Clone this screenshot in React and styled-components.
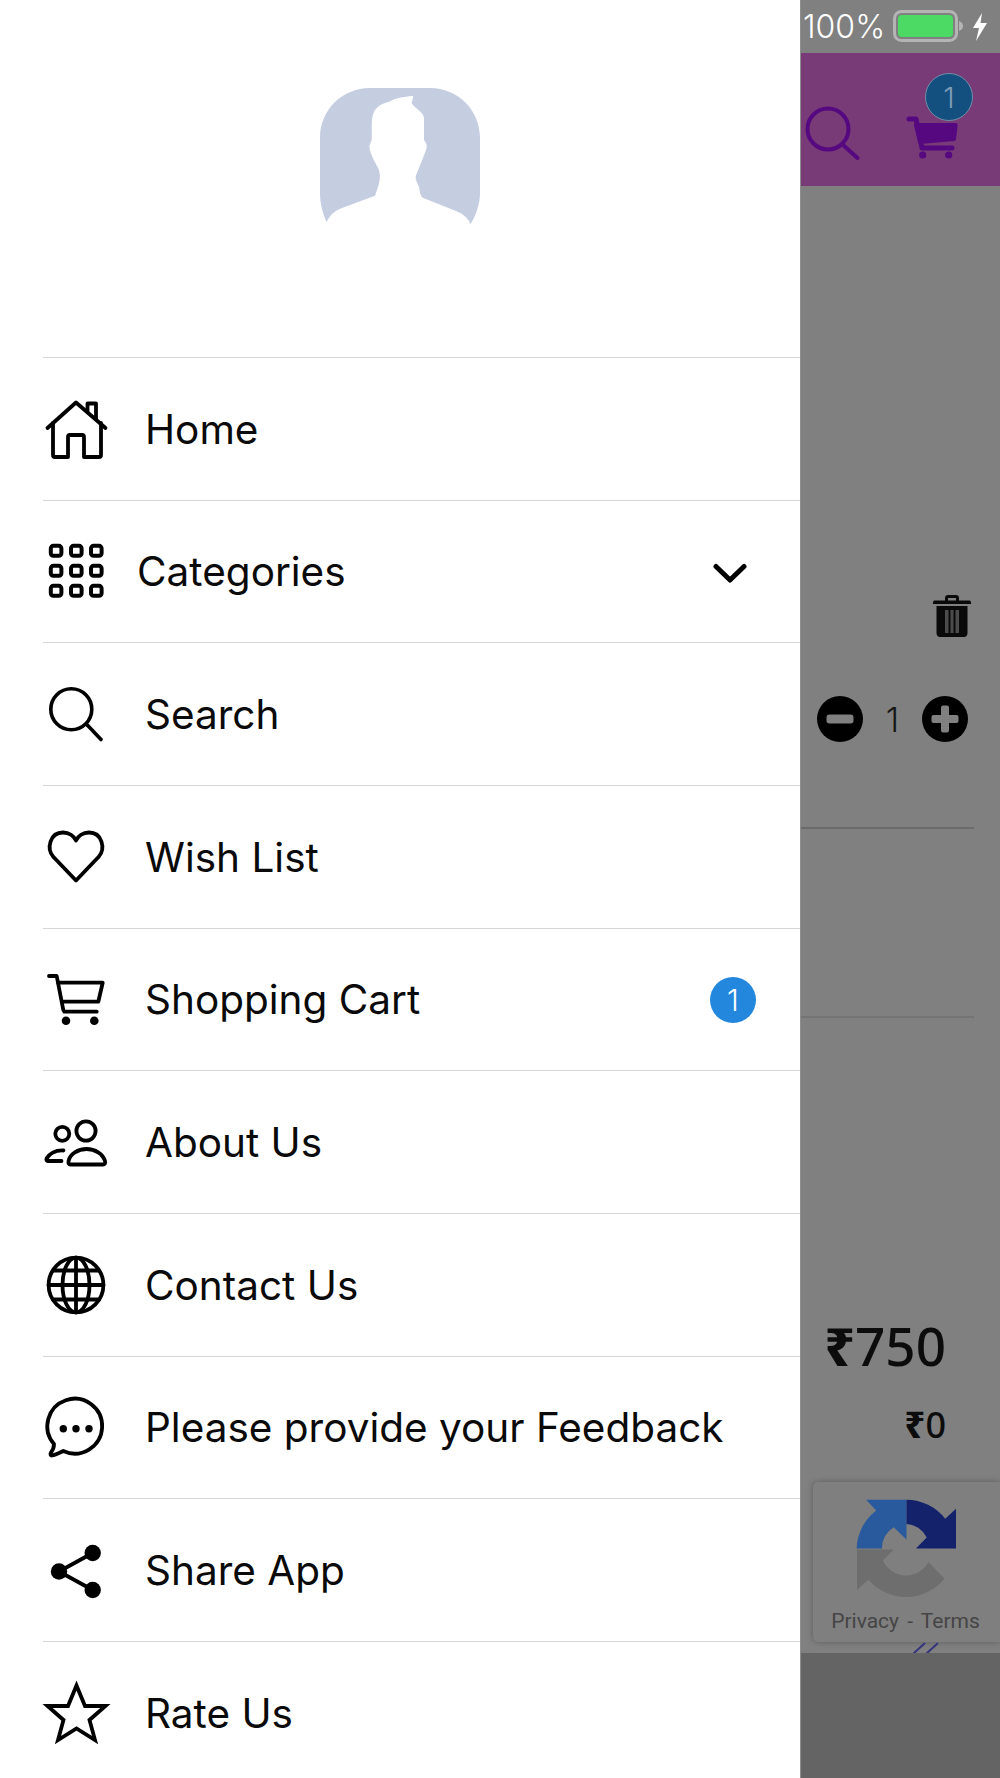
import React from "react";
import styled, { createGlobalStyle } from "styled-components";

const Global = createGlobalStyle`
  html, body { margin: 0; padding: 0; background: #fff; }
  body { font-family: "Inter", "Liberation Sans", sans-serif; }
  * { box-sizing: border-box; }
`;

const Page = styled.div`
  width: 1000px;
  height: 1778px;
  display: flex;
  overflow: hidden;
`;

const Drawer = styled.aside`
  width: 800px;
  flex: none;
  background: #fff;
  display: flex;
  flex-direction: column;
  padding-left: 43px;
`;

const Profile = styled.div`
  height: 357px;
  flex: none;
  padding: 88px 0 0 277px;
`;

const Row = styled.div`
  height: 142.67px;
  flex: none;
  display: flex;
  align-items: center;
  border-top: 1.5px solid #d6d6d6;
  padding-right: 44px;
`;

const IconSlot = styled.svg`
  width: 67px;
  height: 67px;
  flex: none;
  overflow: visible;
  fill: none;
  stroke: #000;
  stroke-width: ${(p) => p.$sw || 3.8};
  stroke-linecap: ${(p) => (p.$miter ? "butt" : "round")};
  stroke-linejoin: ${(p) => (p.$miter ? "miter" : "round")};
`;

const Label = styled.span`
  margin: 2px 0 0 ${(p) => p.$gap}px;
  flex: 1;
  font-size: 40.5px;
  line-height: 48px;
  color: #0a0a0a;
  white-space: nowrap;
`;

const Chevron = styled.svg`
  width: 36px;
  height: 22px;
  margin: 6px 8px 0 0;
  fill: none;
  stroke: #000;
  stroke-width: 5;
  stroke-linecap: round;
  stroke-linejoin: round;
`;

const CountBadge = styled.span`
  width: 46px;
  height: 46px;
  margin-top: 2px;
  border-radius: 50%;
  background: #2287dd;
  color: #fff;
  font-size: 30px;
  font-weight: 300;
  display: flex;
  align-items: center;
  justify-content: center;
`;

const Side = styled.section`
  position: relative;
  flex: 1;
  background: #808080;
  display: flex;
  flex-direction: column;
  border-left: 1px solid #8e8e8e;
`;

const StatusBar = styled.div`
  height: 53px;
  flex: none;
  display: flex;
  align-items: center;
  padding-left: 2px;
  color: #fff;
  font-size: 32px;
  font-weight: 300;
`;

const Battery = styled.svg`
  width: 72px;
  height: 34px;
  margin-left: 8px;
`;

const Bolt = styled.svg`
  width: 16px;
  height: 28px;
  margin-left: 7px;
  fill: #fff;
`;

const TopBar = styled.div`
  height: 133px;
  flex: none;
  background: #783b78;
  position: relative;
  display: flex;
  align-items: flex-end;
  padding: 0 0 25px 4px;
`;

const TopIcon = styled.svg`
  flex: none;
  width: ${(p) => p.$w}px;
  height: ${(p) => p.$h}px;
  margin-left: ${(p) => p.$ml || 0}px;
  fill: none;
  stroke: #55087f;
  stroke-width: 4;
  stroke-linecap: round;
  stroke-linejoin: round;
`;

const TopBadge = styled.span`
  position: absolute;
  left: 124px;
  top: 20px;
  width: 48px;
  height: 48px;
  border-radius: 50%;
  background: #14507f;
  border: 1px solid #6f8ea6;
  color: #7f9db5;
  font-size: 29px;
  font-weight: 300;
  display: flex;
  align-items: center;
  justify-content: center;
`;

const Body = styled.div`
  flex: 1;
  display: flex;
  flex-direction: column;
`;

const TrashRow = styled.div`
  margin-top: 409px;
  height: 42px;
  display: flex;
  justify-content: flex-end;
  padding-right: 29px;
`;

const Stepper = styled.div`
  margin-top: 59px;
  height: 46px;
  display: flex;
  align-items: center;
  padding-left: 16px;
`;

const StepIcon = styled.svg`
  width: 46px;
  height: 46px;
  flex: none;
`;

const Qty = styled.span`
  width: 59px;
  text-align: center;
  font-size: 34px;
  font-weight: 300;
  color: #161616;
`;

const Divider = styled.div`
  margin-top: ${(p) => p.$mt}px;
  width: 173px;
  height: 2px;
  background: ${(p) => p.$c};
`;

const Amount = styled.div`
  margin-top: ${(p) => p.$mt}px;
  padding-right: 54px;
  text-align: right;
  font-family: "Noto Sans", "DejaVu Sans", sans-serif;
  font-size: ${(p) => p.$size}px;
  line-height: ${(p) => p.$lh}px;
  font-weight: ${(p) => p.$weight};
  color: #0c0c0c;
`;

const Rupee = styled.span`
  font-weight: 800;
`;

const Recaptcha = styled.div`
  position: absolute;
  left: 12px;
  right: 0;
  top: 1482px;
  height: 160px;
  background: #7f7f7f;
  border-radius: 5px 0 0 5px;
  box-shadow: 0 0 6px rgba(0, 0, 0, 0.28);
  display: flex;
  flex-direction: column;
  align-items: center;
`;

const CaptchaLogo = styled.svg`
  width: 101px;
  height: 101px;
  margin-top: 17px;
`;

const CaptchaText = styled.div`
  margin-top: 8px;
  margin-right: 2px;
  font-family: "Roboto", sans-serif;
  font-size: 21px;
  word-spacing: 3px;
  line-height: 26px;
  color: #454545;
  white-space: nowrap;
`;

const Slashes = styled.svg`
  position: absolute;
  left: 110px;
  top: 1642px;
  width: 32px;
  height: 12px;
  fill: none;
  stroke: #34347f;
  stroke-width: 2;
`;

const Footer = styled.div`
  height: 125px;
  flex: none;
  background: #646464;
  position: relative;
`;

const HomeIcon = () => (
  <IconSlot viewBox="0 0 67 67">
    <path d="M4.5 33 33 7.5 62.5 33" />
    <path d="M44.5 16V8.5H53V24" />
    <path d="M10 28V60a2 2 0 0 0 2 2H25V42a2 2 0 0 1 2-2H39a2 2 0 0 1 2 2V62H56a2 2 0 0 0 2-2V28" />
  </IconSlot>
);

const GridIcon = () => (
  <IconSlot viewBox="0 0 67 67" $sw={4}>
    {[7.8, 27.8, 47.8].flatMap((y) =>
      [7.8, 28, 48].map((x) => <rect key={`${x}-${y}`} x={x} y={y} width="10.6" height="10" rx="2.6" />)
    )}
  </IconSlot>
);

const SearchIcon = () => (
  <IconSlot viewBox="0 0 67 67" $sw={3.6}>
    <circle cx="28.3" cy="28.3" r="20.5" />
    <path d="M44.3 44 58 58.5" />
  </IconSlot>
);

const HeartIcon = () => (
  <IconSlot viewBox="0 0 67 67">
    <path d="M33 57.5 10.5 34C3 25.5 7 9.5 20 9.5 26 9.5 31 13 33 17.5 35 13 40 9.5 46 9.5 59 9.5 63 25.5 55.5 34Z" />
  </IconSlot>
);

const CartIcon = () => (
  <IconSlot viewBox="0 0 67 67">
    <path d="M6 10H13.7L20.3 44" />
    <path d="M15.3 16.7H59.7L55.3 35.7H19" />
    <path d="M21.3 45.7H53.7" />
    <circle cx="23" cy="54.7" r="4.3" fill="#000" stroke="none" />
    <circle cx="51.3" cy="54.7" r="4.3" fill="#000" stroke="none" />
  </IconSlot>
);

const PeopleIcon = () => (
  <IconSlot viewBox="0 0 67 67">
    <circle cx="43" cy="22" r="9.6" />
    <circle cx="19.3" cy="24.8" r="7" />
    <path d="M25.6 52C27 45 35 40 43.6 40 52 40 60 45 62 52 62.6 54.5 61.5 55.5 60 55.5H27.5C26 55.5 25 54.5 25.6 52Z" />
    <path d="M20.5 41.5C12 41 6 45 3.6 49.5 3 51 3.6 52 5 52H18.5" />
  </IconSlot>
);

const GlobeIcon = () => (
  <IconSlot viewBox="0 0 67 67">
    <circle cx="33" cy="34" r="27.4" />
    <ellipse cx="33" cy="34" rx="13.5" ry="27.4" />
    <path d="M33 6.6V61.4M5.6 34H60.4M10 19.5H56M10 48.5H56" />
  </IconSlot>
);

const ChatIcon = () => (
  <IconSlot viewBox="0 0 67 67">
    <path d="M11 50A27.4 27.4 0 1 1 20.3 57C16 59 12 61 9 61.5 7.5 61.5 7 60 8 58.5 10 56 11 53 11 50Z" />
    <circle cx="20.3" cy="34.8" r="3.7" fill="#000" stroke="none" />
    <circle cx="33" cy="34.8" r="3.7" fill="#000" stroke="none" />
    <circle cx="46" cy="34.8" r="3.7" fill="#000" stroke="none" />
  </IconSlot>
);

const ShareIcon = () => (
  <IconSlot viewBox="0 0 67 67">
    <path d="M49.7 16 16 34.5 49.7 53" />
    <circle cx="49.7" cy="16" r="8.2" fill="#000" stroke="none" />
    <circle cx="16" cy="34.5" r="8.2" fill="#000" stroke="none" />
    <circle cx="49.7" cy="53" r="8.2" fill="#000" stroke="none" />
  </IconSlot>
);

const StarIcon = () => (
  <IconSlot viewBox="0 0 67 67" $sw={3.8} $miter>
    <path d="M33.5 6.5 42 27H62.5L46.5 41 52 61 33.5 49.5 15 61 20.5 41 4.5 27H25Z" />
  </IconSlot>
);

const Avatar = () => (
  <svg width="160" height="138" viewBox="0 0 160 138">
    <path
      fill="#c5cde1"
      d="M6.7 134C3 126 0 116 0 105V50C0 22 22 0 50 0H110C138 0 160 22 160 50V105C160 116 156 127 150.7 136 147 129 143 126 136 123L103.3 110C100 108 100 104 99 99L96 92C95 88 97 85 99 80L105.7 63C107.5 59 107 56 104 52V30C104 24 93 19 91.7 15L93.3 7.7C83 9 75 10 70 13.4 62 15 56 19 54 24 51 29 52 40 51.7 52L49.3 58C50 66 54 72 58 80 61 86 60 92 58.3 98L55 107.7 22 120C14 123 10 127 6.7 134Z"
    />
  </svg>
);

const items = [
  { icon: HomeIcon, text: "Home" },
  { icon: GridIcon, text: "Categories", gap: 27, chevron: true },
  { icon: SearchIcon, text: "Search" },
  { icon: HeartIcon, text: "Wish List" },
  { icon: CartIcon, text: "Shopping Cart", count: 1 },
  { icon: PeopleIcon, text: "About Us" },
  { icon: GlobeIcon, text: "Contact Us" },
  { icon: ChatIcon, text: "Please provide your Feedback" },
  { icon: ShareIcon, text: "Share App" },
  { icon: StarIcon, text: "Rate Us" },
];

export default function App() {
  return (
    <Page>
      <Global />
      <Drawer>
        <Profile>
          <Avatar />
        </Profile>
        {items.map(({ icon: Icon, text, gap = 35, chevron, count }) => (
          <Row key={text}>
            <Icon />
            <Label $gap={gap}>{text}</Label>
            {chevron && (
              <Chevron viewBox="0 0 36 22">
                <path d="M4 3.5 18 17 32 3.5" />
              </Chevron>
            )}
            {count && <CountBadge>{count}</CountBadge>}
          </Row>
        ))}
      </Drawer>
      <Side>
        <StatusBar>
          100%
          <Battery viewBox="0 0 72 34">
            <rect x="1.5" y="1.5" width="62" height="29" rx="7" fill="none" stroke="#b4b4b4" strokeWidth="3" />
            <rect x="5" y="5" width="55" height="22" rx="4" fill="#4cd964" />
            <path d="M66 11c3 1 4 3 4 5s-1 4-4 5Z" fill="#b4b4b4" />
          </Battery>
          <Bolt viewBox="0 0 16 28">
            <path d="M10 0 1 15H7L4 28 15 10H8.5Z" />
          </Bolt>
        </StatusBar>
        <TopBar>
          <TopIcon $w={58} $h={56} viewBox="0 0 58 56">
            <circle cx="23" cy="24" r="20.5" />
            <path d="M37 39 52.5 53" />
          </TopIcon>
          <TopIcon $w={54} $h={46} $ml={43} viewBox="905 112 54 46">
            <path d="M908 116H915L921 145H951" strokeWidth="5" />
            <path d="M915 122H954.7L953 136 919 139Z" fill="#55087f" />
            <circle cx="921.7" cy="152" r="3.6" fill="#55087f" stroke="none" />
            <circle cx="947.7" cy="152" r="3.6" fill="#55087f" stroke="none" />
          </TopIcon>
          <TopBadge>1</TopBadge>
        </TopBar>
        <Body>
          <TrashRow>
            <svg width="38" height="42" viewBox="0 0 38 42">
              <path d="M0 7.5C0 6 1 5.5 2 5.5H12V3C12 1 13 0 15 0H23C25 0 26 1 26 3V5.5H36C37 5.5 38 6 38 7.5V9H0ZM15 3V5.5H23V3Z" fill="#0a0a0a" />
              <path d="M3.5 11H34.5V38C34.5 40.5 33 42 31 42H7C5 42 3.5 40.5 3.5 38Z" fill="#0a0a0a" />
              <path d="M12 15H15.5V38H12ZM17.5 15H20.5V38H17.5ZM22.5 15H26V38H22.5Z" fill="#4c4c4c" />
            </svg>
          </TrashRow>
          <Stepper>
            <StepIcon viewBox="0 0 46 46">
              <circle cx="23" cy="23" r="23" fill="#000" />
              <rect x="9.5" y="18.5" width="27" height="9" rx="3" fill="#808080" />
            </StepIcon>
            <Qty>1</Qty>
            <StepIcon viewBox="0 0 46 46">
              <circle cx="23" cy="23" r="23" fill="#000" />
              <path d="M19 11.5a2 2 0 0 1 2-2h4a2 2 0 0 1 2 2V19h7.5a2 2 0 0 1 2 2v4a2 2 0 0 1-2 2H27v7.5a2 2 0 0 1-2 2h-4a2 2 0 0 1-2-2V27h-7.5a2 2 0 0 1-2-2v-4a2 2 0 0 1 2-2H19Z" fill="#808080" />
            </StepIcon>
          </Stepper>
          <Divider $mt={85} $c="#6b6b6b" />
          <Divider $mt={187} $c="#747474" />
          <Amount $mt={293} $size={53} $lh={70} $weight={500}><Rupee>₹</Rupee>750</Amount>
          <Amount $mt={20} $size={36} $lh={48} $weight={500}><Rupee>₹</Rupee>0</Amount>
        </Body>
        <Recaptcha>
          <CaptchaLogo viewBox="170 598 300 300">
            <path fill="#2a5a9e" d="M172 745A148 148 0 0 1 230 632L200 600H320V718L282 682A75 75 0 0 0 247 745Z" />
            <path fill="#14226c" d="M320 600A148 148 0 0 1 435 657L467 627V745H348L380 712A75 75 0 0 0 320 672Z" />
            <path fill="#6e6e6e" d="M173 748H282L250 781A75 75 0 0 0 385 785L433 835A148 148 0 0 1 207 838L173 868Z" />
          </CaptchaLogo>
          <CaptchaText>Privacy - Terms</CaptchaText>
        </Recaptcha>
        <Slashes viewBox="0 0 32 12">
          <path d="M2 12 14 1M15 12 27 1" />
        </Slashes>
        <Footer />
      </Side>
    </Page>
  );
}
